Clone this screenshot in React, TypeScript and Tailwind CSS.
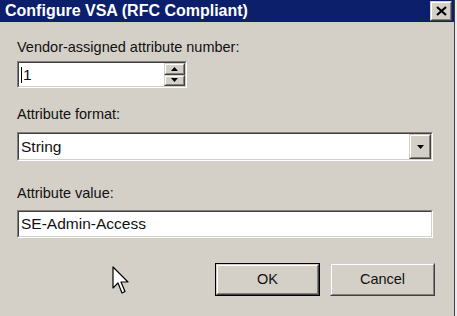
const font = { fontFamily: '"Liberation Sans", Arial, sans-serif' }

const Sunken = ({ className, children }: { className?: string; children: React.ReactNode }) => (
    <div className={`border border-t-[#808080] border-l-[#808080] border-b-white border-r-white ${className ?? ""}`}>
        <div className="flex h-full border border-t-[#404040] border-l-[#404040] border-b-[#d4d0c8] border-r-[#d4d0c8] bg-white">
            {children}
        </div>
    </div>
)

const Raised = ({ className, children }: { className?: string; children?: React.ReactNode }) => (
    <div className={`border border-t-[#d4d0c8] border-l-[#d4d0c8] border-b-[#404040] border-r-[#404040] ${className ?? ""}`}>
        <div className="flex h-full w-full items-center justify-center border border-t-white border-l-white border-b-[#808080] border-r-[#808080] bg-[#d4d0c8]">
            {children}
        </div>
    </div>
)

const Arrow = ({ up }: { up?: boolean }) => (
    <svg width="7" height="4" viewBox="0 0 7 4">
        <path d={up ? "M3.5 0 L7 4 L0 4 Z" : "M0 0 L7 0 L3.5 4 Z"} fill="#000" />
    </svg>
)

const App = () => {
    return (
        <div className="w-[457px] h-[316px] flex bg-[#d4d0c8] text-black overflow-hidden" style={font}>
            <div className="flex-1 flex flex-col">
                {/* title bar */}
                <div className="h-[22px] bg-[#0b1f6b] flex items-center pl-[5px] pr-[2px]">
                    <span className="text-white font-bold text-[16px]">Configure VSA (RFC Compliant)</span>
                    <Raised className="ml-auto w-[22px] h-[20px]">
                        <svg width="11" height="10" viewBox="0 0 11 10">
                            <path d="M1 1 L10 9 M10 1 L1 9" stroke="#000" strokeWidth="2.2" />
                        </svg>
                    </Raised>
                </div>

                <div className="flex-1 flex flex-col pl-[17px] pr-[21px] text-[14.5px] text-[#111]">
                    <label className="mt-[18px] leading-[15px]">Vendor-assigned attribute number:</label>
                    <Sunken className="mt-[6px] w-[170px] h-[27px]">
                        <div className="flex-1 flex items-center pl-[2px] text-[15.5px]">
                            <span className="w-px h-[16px] bg-black mr-[1px]" />
                            <span>1</span>
                        </div>
                        <div className="w-[21px] flex flex-col">
                            <Raised className="h-1/2 w-full"><Arrow up /></Raised>
                            <Raised className="h-1/2 w-full"><Arrow /></Raised>
                        </div>
                    </Sunken>

                    <label className="mt-[19px] leading-[15px]">Attribute format:</label>
                    <Sunken className="mt-[10px] h-[29px]">
                        <div className="flex-1 flex items-center pl-[2px] text-[15.5px]">String</div>
                        <Raised className="w-[22px] h-full"><Arrow /></Raised>
                    </Sunken>

                    <label className="mt-[25px] leading-[15px]">Attribute value:</label>
                    <Sunken className="mt-[9px] h-[28px]">
                        <div className="flex-1 flex items-center pl-[2px] text-[15.5px]">SE-Admin-Access</div>
                    </Sunken>

                    <div className="mt-[25px] flex items-start">
                        <svg className="ml-[95px] mt-[3px]" width="20" height="32" viewBox="0 0 20 32">
                            <path d="M1 1 L1 22 L6 17 L10 27 L13 25.5 L9 16 L16 16 Z" fill="#fff" stroke="#000" strokeWidth="1.2" strokeLinejoin="round" />
                        </svg>
                        <div className="ml-auto -mr-[2px] flex gap-[10px] text-[14.5px]">
                            <div className="border border-black w-[105px] h-[33px] flex">
                                <Raised className="flex-1">OK</Raised>
                            </div>
                            <Raised className="w-[105px] h-[33px]">Cancel</Raised>
                        </div>
                    </div>
                </div>
            </div>
            <div className="w-[3px] flex">
                <div className="w-px bg-[#404040]" />
                <div className="flex-1 bg-[#ececec]" />
            </div>
        </div>
    )
}

export default App
